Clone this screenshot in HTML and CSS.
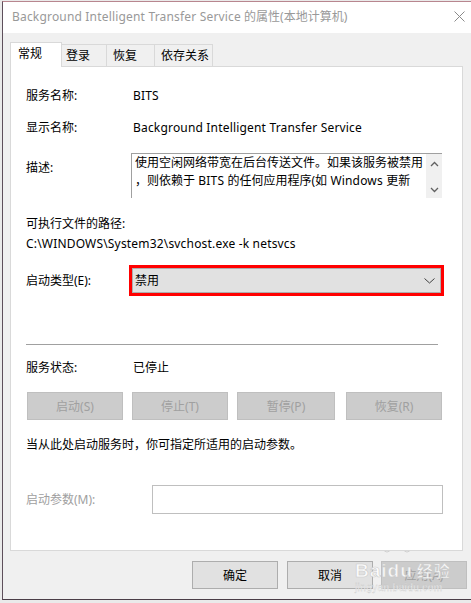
FILE: index.html
```html
<!DOCTYPE html>
<html lang="zh-CN">
<head>
<meta charset="utf-8">
<title>BITS 属性</title>
<link rel="stylesheet" href="styles.css">
</head>
<body>
<div class="window">
  <div class="titlebar">
    <span class="title"><span class="lat">Background Intelligent Transfer Service</span> 的属性(本地计算机)</span>
    <svg class="close" width="11" height="11" viewBox="0 0 11 11"><path d="M0.5 0.5L10.5 10.5M10.5 0.5L0.5 10.5" stroke="#8a8a8a" stroke-width="1" fill="none"/></svg>
  </div>
  <div class="client">
    <div class="tabs">
      <div class="tab active">常规</div>
      <div class="tab t2">登录</div>
      <div class="tab t3">恢复</div>
      <div class="tab t4">依存关系</div>
    </div>
    <div class="panel">
      <div class="row r1"><span class="label">服务名称:</span><span class="value lat">BITS</span></div>
      <div class="row r2"><span class="label">显示名称:</span><span class="value lat">Background Intelligent Transfer Service</span></div>
      <div class="row r3">
        <span class="label desc-label">描述:</span>
        <div class="textarea">
          <div class="ta-text">
            <span class="ta-line">使用空闲网络带宽在后台传送文件。如果该服务被禁用</span>
            <span class="ta-line">，则依赖于<span class="lat"> BITS </span>的任何应用程序(如<span class="lat"> Windows </span>更新</span>
          </div>
          <div class="scroll">
            <svg width="9" height="6" viewBox="0 0 9 6"><path d="M1 5L4.5 1.5L8 5" stroke="#606060" stroke-width="1.3" fill="none"/></svg>
            <svg width="9" height="6" viewBox="0 0 9 6"><path d="M1 1L4.5 4.5L8 1" stroke="#606060" stroke-width="1.3" fill="none"/></svg>
          </div>
        </div>
      </div>
      <div class="path-label">可执行文件的路径:</div>
      <div class="path lat">C:\WINDOWS\System32\svchost.exe -k netsvcs</div>
      <div class="row r4">
        <span class="label">启动类型(E):</span>
        <div class="combo">
          <div class="combo-inner">
            <span>禁用</span>
            <svg width="11" height="6" viewBox="0 0 11 6"><path d="M0.5 0.5L5.5 5L10.5 0.5" stroke="#404040" stroke-width="1" fill="none"/></svg>
          </div>
        </div>
      </div>
      <div class="sep"></div>
      <div class="row r5"><span class="label">服务状态:</span><span class="value">已停止</span></div>
      <div class="btnrow">
        <div class="btn disabled b1">启动(S)</div>
        <div class="btn disabled b2">停止(T)</div>
        <div class="btn disabled b3">暂停(P)</div>
        <div class="btn disabled b4">恢复(R)</div>
      </div>
      <div class="hint">当从此处启动服务时，你可指定所适用的启动参数。</div>
      <div class="row r6">
        <span class="label param-label">启动参数(M):</span>
        <div class="input"></div>
      </div>
    </div>
    <div class="footer">
      <div class="btn fbtn">确定</div>
      <div class="btn fbtn">取消</div>
      <div class="btn fbtn disabled">应用(A)</div>
    </div>
  </div>
  <svg class="paw" width="30" height="24" viewBox="0 0 30 24">
    <g fill="#ffffff" stroke="#c8c8c8" stroke-width="1">
      <ellipse cx="5" cy="12" rx="3.5" ry="4"/>
      <ellipse cx="11" cy="5" rx="3.5" ry="4"/>
      <ellipse cx="19" cy="5" rx="3.5" ry="4"/>
      <ellipse cx="25" cy="12" rx="3.5" ry="4"/>
    </g>
  </svg>
  <div class="watermark">
    <span class="wm-main">Baidu<span class="wm-cn">经验</span></span>
    <span class="wm-url">jingyan.baidu.com</span>
  </div>
</div>
</body>
</html>
```

FILE: styles.css
```css
html, body {
  margin: 0;
  padding: 0;
}
body {
  width: 471px;
  height: 603px;
  overflow: hidden;
  background: #eaeaea;
  font-family: "Noto Sans", "Noto Sans CJK SC", sans-serif;
  font-size: 12px;
  color: #000;
}
.lat {
  letter-spacing: 0.18px;
}
.window {
  position: relative;
  margin: 1px 0 0 2px;
  width: 469px;
  height: 597px;
  border-top: 1px solid #b8868f;
  border-left: 1px solid #5e4f5b;
  border-bottom: 1px solid #4a3d47;
  background: #f0f0f0;
  display: flex;
  flex-direction: column;
  box-sizing: content-box;
}
.titlebar {
  height: 31px;
  background: #fff;
  display: flex;
  align-items: center;
  padding-left: 9px;
  padding-right: 7px;
  justify-content: space-between;
  flex-shrink: 0;
}
.title {
  color: #999;
  line-height: 16px;
  margin-top: -1px;
  white-space: nowrap;
}
.close {
  margin-top: -2px;
}
.client {
  flex: 1;
  display: flex;
  flex-direction: column;
  padding-left: 7px;
}
.tabs {
  margin-top: 9px;
  height: 24px;
  display: flex;
  align-items: flex-end;
  position: relative;
  z-index: 2;
}
.tab {
  box-sizing: border-box;
  height: 22px;
  border-top: 1px solid #d9d9d9;
  border-right: 1px solid #d9d9d9;
  background: #f0f0f0;
  padding-left: 4px;
  line-height: 21px;
  white-space: nowrap;
}
.tab.active {
  height: 25px;
  margin-bottom: -1px;
  width: 52px;
  background: #fff;
  border-left: 1px solid #d9d9d9;
  padding-left: 7px;
  line-height: 22px;
}
.t2 { width: 45px; }
.t3 { width: 48px; padding-left: 6px; }
.t4 { width: 58px; padding-left: 6px; }
.panel {
  position: relative;
  z-index: 1;
  box-sizing: border-box;
  width: 453px;
  height: 485px;
  background: #fff;
  border: 1px solid #d9d9d9;
  padding: 20px 0 0 15px;
}
.row {
  display: flex;
  align-items: center;
  line-height: 18px;
}
.label {
  width: 107px;
  flex-shrink: 0;
  white-space: nowrap;
}
.value {
  white-space: nowrap;
}
.r2 { margin-top: 14px; }
.r3 {
  margin-top: 16px;
  align-items: flex-start;
}
.desc-label { padding-top: 6px; }
.textarea {
  margin-left: -2px;
  box-sizing: border-box;
  width: 311px;
  height: 45px;
  border-top: 1px solid #a0a0a0;
  border-left: 1px solid #a0a0a0;
  display: flex;
  overflow: hidden;
}
.ta-text {
  flex: 1;
  padding-left: 3px;
  overflow: hidden;
}
.ta-line {
  display: block;
  white-space: nowrap;
  line-height: 18px;
}
.scroll {
  width: 16px;
  background: #f0f0f0;
  display: flex;
  flex-direction: column;
  align-items: center;
  justify-content: space-between;
  padding: 7px 0 5px;
  box-sizing: border-box;
}
.path-label {
  margin-top: 17px;
  line-height: 18px;
}
.path {
  margin-top: 2px;
  line-height: 18px;
}
.r4 { margin-top: 12px; }
.combo {
  margin-left: -4px;
  box-sizing: border-box;
  width: 315px;
  height: 31px;
  border: 3px solid #ff0000;
}
.combo-inner {
  box-sizing: border-box;
  height: 25px;
  border: 1px solid #adadad;
  background: #e1e1e1;
  display: flex;
  align-items: center;
  justify-content: space-between;
  padding: 0 5px 0 2px;
}
.sep {
  margin-top: 48px;
  width: 412px;
  height: 1px;
  background: #a0a0a0;
}
.r5 { margin-top: 14px; }
.btnrow {
  margin-top: 15px;
  margin-left: 1px;
  display: flex;
}
.btn {
  box-sizing: border-box;
  height: 28px;
  border: 1px solid #adadad;
  background: #e1e1e1;
  display: flex;
  align-items: center;
  justify-content: center;
  white-space: nowrap;
}
.btn.disabled {
  background: #cccccc;
  border-color: #bfbfbf;
  color: #a0a0a0;
}
.b1 { width: 96px; }
.b2 { width: 96px; margin-left: 9px; }
.b3 { width: 98px; margin-left: 9px; }
.b4 { width: 96px; margin-left: 11px; }
.hint {
  margin-top: 16px;
  line-height: 18px;
}
.r6 { margin-top: 31px; }
.param-label {
  width: 126px;
  color: #a0a0a0;
}
.input {
  box-sizing: border-box;
  width: 291px;
  height: 29px;
  border: 1px solid #bfbfbf;
  background: #fff;
}
.footer {
  margin-top: 10px;
  display: flex;
  justify-content: flex-end;
  padding-right: 5px;
  gap: 8px;
}
.fbtn {
  width: 86px;
}
.fbtn:first-child { margin-right: 1px; }
.paw {
  position: absolute;
  left: 379px;
  top: 534px;
  opacity: 0.85;
}
.watermark {
  position: absolute;
  left: 352px;
  top: 557px;
  display: flex;
  flex-direction: column;
  align-items: flex-start;
  pointer-events: none;
  opacity: 0.85;
}
.wm-main {
  font-family: "Liberation Sans", sans-serif;
  font-size: 19px;
  font-weight: bold;
  color: #fff;
  line-height: 22px;
  -webkit-text-stroke: 0.6px #c8c8c8;
  letter-spacing: 1px;
}
.wm-cn {
  font-family: "Noto Sans CJK SC", sans-serif;
  font-size: 16px;
  margin-left: 4px;
}
.wm-url {
  font-family: "Liberation Sans", sans-serif;
  font-size: 10px;
  color: #fff;
  -webkit-text-stroke: 0.3px #c0c0c0;
  line-height: 12px;
  letter-spacing: 0.4px;
}
```
